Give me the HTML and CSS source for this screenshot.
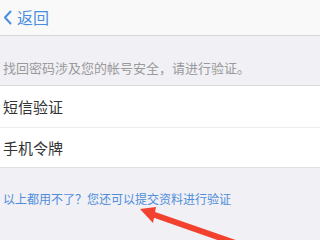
FILE: index.html
```html
<!DOCTYPE html>
<html lang="zh-CN">

<head>
    <meta charset="UTF-8">
    <meta name="viewport" content="width=device-width, initial-scale=1.0">
    <title>找回密码</title>
    <link rel="stylesheet" href="styles.css">
</head>

<body>
    <div class="page">
        <!-- Barra superior -->
        <div class="top-bar">
            <a class="back" href="#">
                <svg class="back-icon" width="9" height="15" viewBox="0 0 9 15">
                    <polyline points="7.5,1.5 2,7.5 7.5,13.5" fill="none" stroke="#4a8ee0" stroke-width="2" stroke-linecap="round" stroke-linejoin="round" />
                </svg>
                <span>返回</span>
            </a>
        </div>

        <div class="tip">找回密码涉及您的帐号安全，请进行验证。</div>

        <div class="options">
            <div class="option">短信验证</div>
            <div class="option">手机令牌</div>
        </div>

        <div class="more">
            <a href="#">以上都用不了？您还可以提交资料进行验证</a>
        </div>

        <!-- Seta de destaque -->
        <svg class="arrow" width="320" height="240" viewBox="0 0 320 240">
            <polygon points="140,209 156,207 153,223" fill="#f2412f" />
            <line x1="152" y1="214" x2="238" y2="244" stroke="#f2412f" stroke-width="6" />
        </svg>
    </div>
</body>

</html>
```

FILE: styles.css
```css
* {
    box-sizing: border-box;
    margin: 0;
    padding: 0;
}

body {
    font-family: "Noto Sans CJK SC", "Noto Sans", sans-serif;
    background-color: #f0f0f5;
    width: 320px;
    height: 240px;
    overflow: hidden;
}

.page {
    position: relative;
    height: 240px;
}

.top-bar {
    height: 36px;
    background-color: #f9f9f9;
    border-bottom: 1px solid #d6d6d6;
    display: flex;
    align-items: center;
    padding-left: 3px;
}

.back {
    display: flex;
    align-items: center;
    gap: 5px;
    color: #4a8ee0;
    text-decoration: none;
    font-size: 16px;
    line-height: 20px;
}

.back span {
    margin-top: -1px;
}

.tip {
    padding: 22px 0 8px 3px;
    font-size: 13px;
    line-height: 19px;
    color: #9a9a9a;
}

.options {
    background-color: #fff;
    border-top: 1px solid #d9d9d9;
    border-bottom: 1px solid #e0e0e0;
}

.option {
    height: 41px;
    display: flex;
    align-items: center;
    padding-left: 3px;
    font-size: 15px;
    color: #333;
}

.option + .option {
    border-top: 1px solid #ececec;
    height: 40px;
}

.more {
    padding: 23px 0 0 3px;
    font-size: 12px;
    line-height: 16px;
}

.more a {
    color: #4f8ddb;
    text-decoration: none;
}

.arrow {
    position: absolute;
    left: 0;
    top: 0;
}
```
